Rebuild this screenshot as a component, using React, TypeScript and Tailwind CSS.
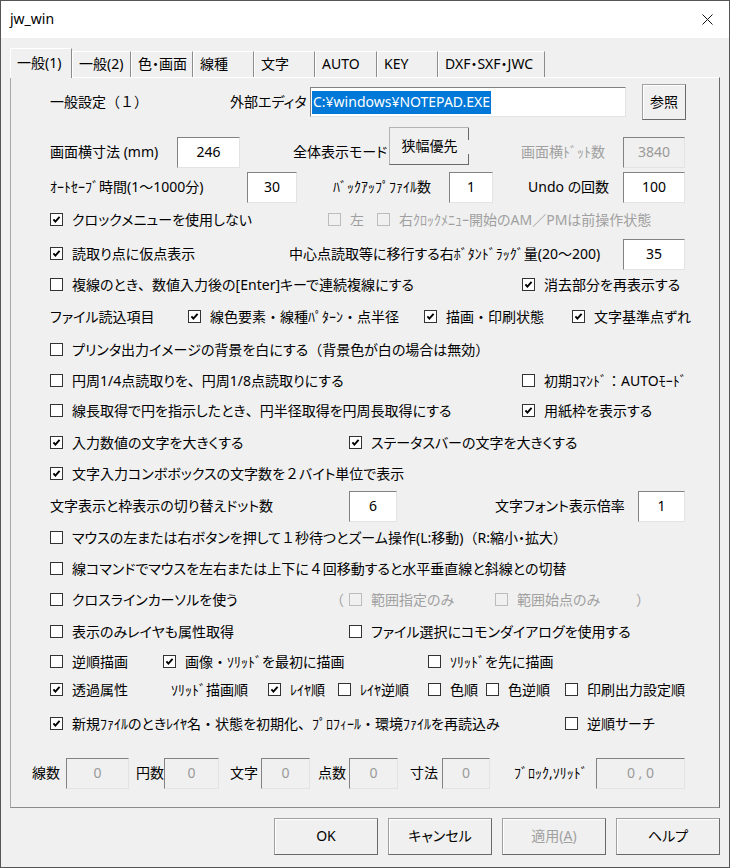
import React from 'react';

// full-width punctuation keeps its full width, kana stay proportional
const FULL = '（）、１２４：／・';
const fw = (s: string, keep = '') =>
  s.split('').map((c, i) =>
    FULL.includes(c) && !keep.includes(c) ? (
      <span key={i} className="[font-feature-settings:normal]">
        {c}
      </span>
    ) : (
      c
    )
  );

type CheckProps = {
  label: string;
  checked?: boolean;
  disabled?: boolean;
  className?: string;
  narrowDot?: boolean;
};

const Check = ({ label, checked, disabled, className = '', narrowDot }: CheckProps) => (
  <div className={`flex items-center shrink-0 ${className}`}>
    <span
      className={`w-[13px] h-[13px] shrink-0 border flex items-center justify-center ${
        disabled ? 'border-[#bcbcbc] bg-[#f0f0f0]' : 'border-[#333] bg-white'
      }`}
    >
      {checked && (
        <svg width="9" height="9" viewBox="0 0 9 9">
          <path d="M1.4 4.4 L3.4 6.6 L7.6 1.8" stroke="#000" strokeWidth="1.9" fill="none" />
        </svg>
      )}
    </span>
    <span className={`ml-[9px] whitespace-nowrap ${disabled ? 'text-[#a0a0a0]' : ''}`}>
      {fw(label, narrowDot ? '・' : '')}
    </span>
  </div>
);

const Field = ({ value, className = '', disabled }: { value: string; className?: string; disabled?: boolean }) => (
  <div
    className={`h-[31px] shrink-0 flex items-center justify-center border border-t-[#828282] border-l-[#828282] border-r-[#e3e3e3] border-b-[#e3e3e3] ${
      disabled ? 'bg-[#f0f0f0] text-[#9a9a9a]' : 'bg-white'
    } ${className}`}
  >
    {value}
  </div>
);

const Btn = ({ children, className = '' }: { children: React.ReactNode; className?: string }) => (
  <div
    className={`shrink-0 flex items-center justify-center bg-[#f0f0f0] border border-[#a0a0a0] border-r-[#696969] border-b-[#696969] shadow-[inset_1px_1px_0_#fff] ${className}`}
  >
    {children}
  </div>
);

const tabs = [
  { label: '一般(1)', w: 'w-[62px]' },
  { label: '一般(2)', w: 'w-[59px]' },
  { label: '色・画面', w: 'w-[62px]' },
  { label: '線種', w: 'w-[61px]' },
  { label: '文字', w: 'w-[61px]' },
  { label: 'AUTO', w: 'w-[62px]' },
  { label: 'KEY', w: 'w-[61px]' },
  { label: 'DXF・SXF・JWC', w: 'w-[107px]' },
];

const row = 'flex items-center h-[30px] pl-[39px] whitespace-nowrap';

export default function App() {
  return (
    <div className="w-[730px] h-[868px] border border-[#555] bg-[#f0f0f0] flex flex-col text-[14px] text-black font-['Noto_Sans','Noto_Sans_CJK_JP',sans-serif] [font-feature-settings:'palt'] leading-[1.2] overflow-hidden">
      {/* title bar */}
      <div className="h-[37px] bg-white flex items-center justify-between pl-[9px] pr-[16px] shrink-0">
        <span className="text-[14px]">jw_win</span>
        <svg width="11" height="11" viewBox="0 0 11 11">
          <path d="M0.5 0.5 L10.5 10.5 M10.5 0.5 L0.5 10.5" stroke="#111" strokeWidth="1" />
        </svg>
      </div>

      <div className="flex-1 flex flex-col px-[9px]">
        {/* tabs */}
        <div className="flex items-end h-[29px] mt-[10px]">
          {tabs.map((t, i) => (
            <div
              key={t.label}
              className={`${t.w} shrink-0 flex items-center pl-[6px] border-t border-l border-t-white border-l-white border-r border-r-[#8c8c8c] bg-[#f0f0f0] ${
                i === 0 ? 'h-[30px] -mb-px relative z-10' : 'h-[26px]'
              }`}
            >
              <span className="whitespace-nowrap">{t.label}</span>
            </div>
          ))}
        </div>

        {/* panel */}
        <div className="border border-t-white border-l-[#a8a8a8] border-r-[#696969] border-b-[#8c8c8c] pt-[9px] pb-[19px]">
          <div className={row}>
            <span className="w-[180px] shrink-0">{fw('一般設定（１）')}</span>
            <span className="w-[80px] shrink-0">外部エディタ</span>
            <div className="w-[316px] h-[30px] shrink-0 bg-white border border-t-[#828282] border-l-[#828282] border-r-[#e3e3e3] border-b-[#e3e3e3] flex items-center pl-[1px]">
              <span className="bg-[#0078d7] text-white px-[1px] h-[23px] flex items-center">C:¥windows¥NOTEPAD.EXE</span>
            </div>
            <Btn className="w-[44px] h-[36px] ml-[16px]">参照</Btn>
          </div>

          <div className={`${row} mt-[20px]`}>
            <span className="w-[127px] shrink-0">画面横寸法 (mm)</span>
            <Field value="246" className="w-[63px]" />
            <span className="w-[96px] shrink-0 ml-[53px]">全体表示モード</span>
            <div className="relative w-[80px] h-[38px] mb-[12px] shrink-0 flex items-center justify-center bg-[#f0f0f0] border-l border-t border-b border-l-[#b4b4b4] border-t-[#b4b4b4] border-b-[#696969]">
              狭幅優先
              <span className="absolute right-0 top-0 w-px h-[12px] bg-[#696969]" />
              <span className="absolute right-0 bottom-0 w-px h-[10px] bg-[#696969]" />
            </div>
            <span className="w-[102px] shrink-0 ml-[52px] text-[#a0a0a0]">画面横ﾄﾞｯﾄ数</span>
            <Field value="3840" className="w-[62px]" disabled />
          </div>

          <div className={`${row} mt-[5px]`}>
            <span className="w-[197px] shrink-0">ｵｰﾄｾｰﾌﾞ時間(1〜1000分)</span>
            <Field value="30" className="w-[50px]" />
            <span className="w-[116px] shrink-0 ml-[36px]">ﾊﾞｯｸｱｯﾌﾟﾌｧｲﾙ数</span>
            <Field value="1" className="w-[44px]" />
            <span className="w-[95px] shrink-0 ml-[35px]">Undo の回数</span>
            <Field value="100" className="w-[62px]" />
          </div>

          <div className={`${row} mt-[3px]`}>
            <Check checked label="クロックメニューを使用しない" className="w-[278px]" />
            <Check disabled label="左" className="w-[49px]" />
            <Check disabled label="右ｸﾛｯｸﾒﾆｭｰ開始のAM／PMは前操作状態" />
          </div>

          <div className={`${row} mt-[4px]`}>
            <Check checked label="読取り点に仮点表示" className="w-[239px]" />
            <span className="w-[334px] shrink-0">中心点読取等に移行する右ﾎﾞﾀﾝﾄﾞﾗｯｸﾞ量(20〜200)</span>
            <Field value="35" className="w-[62px]" />
          </div>

          <div className={`${row} mt-[1px]`}>
            <Check label="複線のとき、数値入力後の[Enter]キーで連続複線にする" className="w-[472px]" />
            <Check checked label="消去部分を再表示する" />
          </div>

          <div className={`${row} mt-[2px]`}>
            <span className="w-[138px] shrink-0">ファイル読込項目</span>
            <Check checked label="線色要素・線種ﾊﾟﾀｰﾝ・点半径" className="w-[236px]" />
            <Check checked label="描画・印刷状態" className="w-[148px]" />
            <Check checked label="文字基準点ずれ" />
          </div>

          <div className={`${row} mt-[3px]`}>
            <Check label="プリンタ出力イメージの背景を白にする（背景色が白の場合は無効）" />
          </div>

          <div className={`${row} mt-[1px]`}>
            <Check label="円周1/4点読取りを、円周1/8点読取りにする" className="w-[472px]" />
            <Check label="初期ｺﾏﾝﾄﾞ：AUTOﾓｰﾄﾞ" />
          </div>

          <div className={row}>
            <Check label="線長取得で円を指示したとき、円半径取得を円周長取得にする" className="w-[472px]" />
            <Check checked label="用紙枠を表示する" />
          </div>

          <div className={`${row} mt-[2px]`}>
            <Check checked label="入力数値の文字を大きくする" className="w-[299px]" />
            <Check checked label="ステータスバーの文字を大きくする" />
          </div>

          <div className={`${row} mt-[1px]`}>
            <Check checked label="文字入力コンボボックスの文字数を２バイト単位で表示" />
          </div>

          <div className={`${row} mt-[2px]`}>
            <span className="w-[299px] shrink-0">文字表示と枠表示の切り替えドット数</span>
            <Field value="6" className="w-[48px]" />
            <span className="w-[143px] shrink-0 ml-[98px]">文字フォント表示倍率</span>
            <Field value="1" className="w-[47px]" />
          </div>

          <div className={`${row} mt-[2px]`}>
            <Check narrowDot label="マウスの左または右ボタンを押して１秒待つとズーム操作(L:移動)（R:縮小・拡大）" />
          </div>

          <div className={`${row} mt-[1px]`}>
            <Check label="線コマンドでマウスを左右または上下に４回移動すると水平垂直線と斜線との切替" />
          </div>

          <div className={`${row} mt-[1px]`}>
            <Check label="クロスラインカーソルを使う" className="w-[280px]" />
            <span className="w-[19px] shrink-0 text-[#a0a0a0]">{fw('（')}</span>
            <Check disabled label="範囲指定のみ" className="w-[146px]" />
            <Check disabled label="範囲始点のみ" className="w-[141px]" />
            <span className="text-[#a0a0a0]">{fw('）')}</span>
          </div>

          <div className={`${row} mt-[2px]`}>
            <Check label="表示のみレイヤも属性取得" className="w-[299px]" />
            <Check label="ファイル選択にコモンダイアログを使用する" />
          </div>

          <div className={row}>
            <Check label="逆順描画" className="w-[113px]" />
            <Check checked label="画像・ｿﾘｯﾄﾞを最初に描画" className="w-[265px]" />
            <Check label="ｿﾘｯﾄﾞを先に描画" />
          </div>

          <div className={`${row} mt-[-2px]`}>
            <Check checked label="透過属性" className="w-[121px]" />
            <span className="w-[97px] shrink-0">ｿﾘｯﾄﾞ描画順</span>
            <Check checked label="ﾚｲﾔ順" className="w-[70px]" />
            <Check label="ﾚｲﾔ逆順" className="w-[90px]" />
            <Check label="色順" className="w-[58px]" />
            <Check label="色逆順" className="w-[79px]" />
            <Check label="印刷出力設定順" />
          </div>

          <div className={`${row} mt-[4px]`}>
            <Check checked label="新規ﾌｧｲﾙのときﾚｲﾔ名・状態を初期化、ﾌﾟﾛﾌｨｰﾙ・環境ﾌｧｲﾙを再読込み" className="w-[515px]" />
            <Check label="逆順サーチ" />
          </div>

          <div className="flex items-center h-[30px] pl-[21px] mt-[19px] whitespace-nowrap">
            <span className="w-[34px] shrink-0">線数</span>
            <Field value="0" className="w-[63px]" disabled />
            <span className="w-[28px] shrink-0 ml-[7px]">円数</span>
            <Field value="0" className="w-[55px]" disabled />
            <span className="w-[31px] shrink-0 ml-[11px]">文字</span>
            <Field value="0" className="w-[49px]" disabled />
            <span className="w-[31px] shrink-0 ml-[8px]">点数</span>
            <Field value="0" className="w-[49px]" disabled />
            <span className="w-[32px] shrink-0 ml-[12px]">寸法</span>
            <Field value="0" className="w-[48px]" disabled />
            <span className="w-[82px] shrink-0 ml-[24px]">ﾌﾞﾛｯｸ,ｿﾘｯﾄﾞ</span>
            <Field value="0 , 0" className="w-[89px]" disabled />
          </div>
        </div>

        {/* footer buttons */}
        <div className="flex justify-end gap-[10px] mt-[10px]">
          <Btn className="w-[104px] h-[37px]">OK</Btn>
          <Btn className="w-[104px] h-[37px]">キャンセル</Btn>
          <Btn className="w-[104px] h-[37px] text-[#a0a0a0]">
            適用(<span className="underline">A</span>)
          </Btn>
          <Btn className="w-[104px] h-[37px]">ヘルプ</Btn>
        </div>
      </div>
    </div>
  );
}
